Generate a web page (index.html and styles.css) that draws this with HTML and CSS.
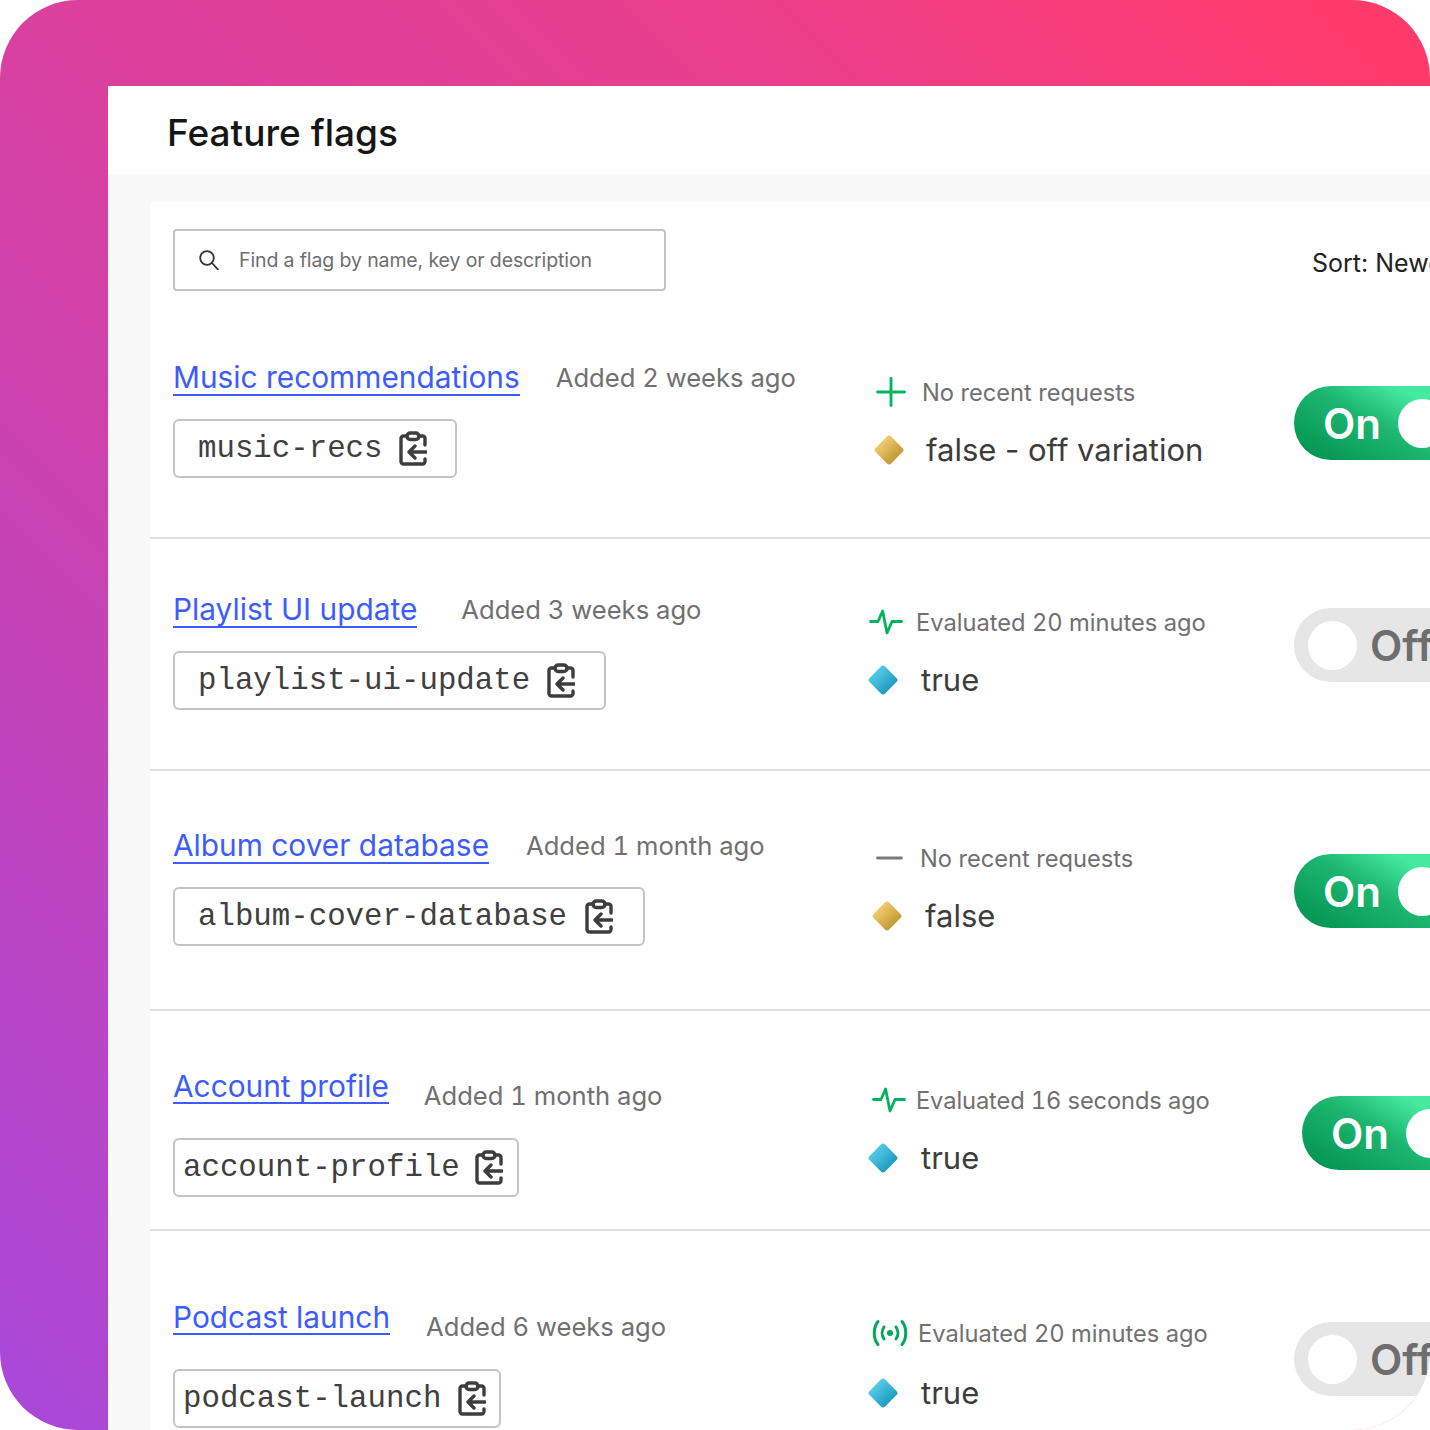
FILE: index.html
```html
<!DOCTYPE html>
<html lang="en">
<head>
    <meta charset="UTF-8">
    <title>Feature flags</title>
    <link rel="stylesheet" href="styles.css">
</head>
<body>
    <svg class="sprites" width="0" height="0">
        <symbol id="clip" viewBox="0 0 28 35">
            <g fill="none" stroke="#3d3d3d" stroke-width="3.4" stroke-linecap="round" stroke-linejoin="round">
                <path d="M26 14V7.5a2.500 2.500 0 0 0-2.500-2.500H20M8 5H4.500A2.500 2.500 0 0 0 2 7.500v23A2.500 2.500 0 0 0 4.500 33h19a2.500 2.500 0 0 0 2.500-2.500V28"/>
                <rect x="8" y="2" width="12" height="6.500" rx="3.200"/>
                <path d="M27 21H10M16 15l-6 6 6 6"/>
            </g>
        </symbol>
    </svg>

    <div class="frame">
        <main class="panel">
            <header class="top">
                <h1>Feature flags</h1>
            </header>
            <div class="content">
                <section class="card">
                    <div class="toolbar">
                        <div class="search">
                            <svg class="search-icon" viewBox="0 0 20 20" width="20" height="20">
                                <circle cx="8" cy="8" r="6.800" fill="none" stroke="#333" stroke-width="1.800"/>
                                <path d="M13 13l6 6.500" fill="none" stroke="#333" stroke-width="1.800" stroke-linecap="round"/>
                            </svg>
                            <span>Find a flag by name, key or description</span>
                        </div>
                        <div class="sort">Sort: Newest</div>
                    </div>

                    <article class="row row-1">
                        <div class="flag">
                            <div class="flag-title">
                                <a href="#">Music recommendations</a>
                                <span class="added">Added 2 weeks ago</span>
                            </div>
                            <div class="key">music-recs <svg class="clip"><use href="#clip"/></svg></div>
                        </div>
                        <div class="status">
                            <div class="status-line">
                                <svg class="status-icon" viewBox="0 0 30 30" width="30" height="30">
                                    <path d="M15 1.500v27M1.500 15h27" fill="none" stroke="#00b45f" stroke-width="2.800" stroke-linecap="round"/>
                                </svg>
                                <span>No recent requests</span>
                            </div>
                            <div class="value"><i class="diamond gold"></i>false - off variation</div>
                        </div>
                        <div class="toggle on"><span>On</span><i class="knob"></i></div>
                    </article>

                    <article class="row row-2">
                        <div class="flag">
                            <div class="flag-title">
                                <a href="#">Playlist UI update</a>
                                <span class="added">Added 3 weeks ago</span>
                            </div>
                            <div class="key">playlist-ui-update <svg class="clip"><use href="#clip"/></svg></div>
                        </div>
                        <div class="status">
                            <div class="status-line">
                                <svg class="status-icon" viewBox="0 0 34 26" width="34" height="26">
                                    <path d="M1.500 12.500H9L13.600 2 18 24l5-11.500h9.500" fill="none" stroke="#00b45f" stroke-width="2.800" stroke-linecap="round" stroke-linejoin="round"/>
                                </svg>
                                <span>Evaluated 20 minutes ago</span>
                            </div>
                            <div class="value"><i class="diamond blue"></i>true</div>
                        </div>
                        <div class="toggle off"><i class="knob"></i><span>Off</span></div>
                    </article>

                    <article class="row row-3">
                        <div class="flag">
                            <div class="flag-title">
                                <a href="#">Album cover database</a>
                                <span class="added">Added 1 month ago</span>
                            </div>
                            <div class="key">album-cover-database <svg class="clip"><use href="#clip"/></svg></div>
                        </div>
                        <div class="status">
                            <div class="status-line">
                                <svg class="status-icon" viewBox="0 0 27 6" width="27" height="6">
                                    <path d="M1.500 3h24" fill="none" stroke="#7a7a7a" stroke-width="2.800" stroke-linecap="round"/>
                                </svg>
                                <span>No recent requests</span>
                            </div>
                            <div class="value"><i class="diamond gold"></i>false</div>
                        </div>
                        <div class="toggle on"><span>On</span><i class="knob"></i></div>
                    </article>

                    <article class="row row-4">
                        <div class="flag">
                            <div class="flag-title">
                                <a href="#">Account profile</a>
                                <span class="added">Added 1 month ago</span>
                            </div>
                            <div class="key">account-profile <svg class="clip"><use href="#clip"/></svg></div>
                        </div>
                        <div class="status">
                            <div class="status-line">
                                <svg class="status-icon" viewBox="0 0 34 26" width="34" height="26">
                                    <path d="M1.500 12.500H9L13.600 2 18 24l5-11.500h9.500" fill="none" stroke="#00b45f" stroke-width="2.800" stroke-linecap="round" stroke-linejoin="round"/>
                                </svg>
                                <span>Evaluated 16 seconds ago</span>
                            </div>
                            <div class="value"><i class="diamond blue"></i>true</div>
                        </div>
                        <div class="toggle on"><span>On</span><i class="knob"></i></div>
                    </article>

                    <article class="row row-5">
                        <div class="flag">
                            <div class="flag-title">
                                <a href="#">Podcast launch</a>
                                <span class="added">Added 6 weeks ago</span>
                            </div>
                            <div class="key">podcast-launch <svg class="clip"><use href="#clip"/></svg></div>
                        </div>
                        <div class="status">
                            <div class="status-line">
                                <svg class="status-icon" viewBox="0 0 36 28" width="36" height="28">
                                    <g fill="none" stroke="#00a85a" stroke-width="3" stroke-linecap="round">
                                        <path d="M6 2.500c-5 6-5 17 0 23M30 2.500c5 6 5 17 0 23"/>
                                        <path d="M12 8c-2.500 3.500-2.500 8.500 0 12M24 8c2.500 3.500 2.500 8.500 0 12"/>
                                    </g>
                                    <circle cx="18" cy="14" r="3" fill="#00a85a"/>
                                </svg>
                                <span>Evaluated 20 minutes ago</span>
                            </div>
                            <div class="value"><i class="diamond blue"></i>true</div>
                        </div>
                        <div class="toggle off"><i class="knob"></i><span>Off</span></div>
                    </article>
                </section>
            </div>
        </main>
    </div>
</body>
</html>
```

FILE: styles.css
```css
html, body {
    margin: 0;
    padding: 0;
    background-color: #fff;
}

body {
    font-family: Inter, "Liberation Sans", sans-serif;
    color: #3d3d3d;
}

.sprites {
    position: absolute;
}

.frame {
    width: 1430px;
    height: 1430px;
    padding: 86px 0 0 108px;
    box-sizing: border-box;
    border-radius: 78px;
    overflow: hidden;
    background: linear-gradient(45deg, #a848da 0%, #d9409f 50%, #e83e8c 74%, #ff3a6b 96%);
}

.panel {
    width: 1322px;
    height: 1344px;
    overflow: hidden;
    background-color: #f8f8f8;
}

.top {
    height: 86px;
    padding: 3px 0 0 59px;
    background-color: #fff;
    display: flex;
    align-items: center;
}

.top h1 {
    margin: 0;
    font-size: 37px;
    font-weight: 500;
    color: #161616;
}

.content {
    padding: 26px 0 0 42px;
}

.card {
    width: 1280px;
    height: 1300px;
    background-color: #fff;
    border-radius: 4px 0 0 0;
}

/* search + sort */
.toolbar {
    display: flex;
    align-items: flex-start;
    padding: 28px 0 0 23px;
    height: 62px;
    white-space: nowrap;
}

.search {
    flex: none;
    width: 493px;
    height: 62px;
    box-sizing: border-box;
    border: 2px solid #c4c4c4;
    border-radius: 4px;
    display: flex;
    align-items: center;
    gap: 20px;
    padding: 0 0 1px 24px;
    font-size: 19.500px;
    letter-spacing: -0.12px;
    color: #6e6e6e;
}

.search-icon {
    flex: none;
}

.sort {
    margin: 19px 0 0 646px;
    font-size: 25px;
    color: #222;
}

/* flag rows */
.row {
    display: grid;
    grid-template-columns: 696px 425px 1fr;
    align-items: start;
    padding-left: 23px;
    box-sizing: border-box;
    border-bottom: 2px solid #dcdcdc;
    white-space: nowrap;
}

.flag-title {
    display: flex;
    align-items: flex-start;
    height: 38px;
}

.flag-title a {
    font-size: 29.850px;
    line-height: 34px;
    padding-top: 2px;
    color: #3d5cff;
    text-decoration: none;
    border-bottom: 2px solid #3d5cff;
}

.added {
    font-size: 25.600px;
    font-feature-settings: "tnum";
    line-height: 36px;
    color: #707070;
}

.key {
    display: inline-flex;
    align-items: center;
    height: 59px;
    box-sizing: border-box;
    border: 2px solid #c4c4c4;
    border-radius: 6px;
    font-family: "Liberation Mono", monospace;
    font-size: 30.750px;
    color: #404040;
    gap: 17px;
}

.clip {
    width: 28px;
    height: 35px;
}

.status-line {
    display: flex;
    align-items: center;
    height: 30px;
    font-size: 23.700px;
    font-feature-settings: "tnum";
    color: #707070;
}

.status-icon {
    flex: none;
}

.value {
    display: flex;
    align-items: center;
    font-size: 31px;
    line-height: 40px;
    color: #3d3d3d;
}

.diamond {
    width: 22px;
    height: 22px;
    flex: none;
    border-radius: 3px;
    transform: rotate(45deg);
}

.diamond.gold {
    background: linear-gradient(90deg, #eecb6e, #c49a36);
}

.diamond.blue {
    background: linear-gradient(90deg, #52cbe4, #209cc3);
}

.toggle {
    width: 200px;
    height: 74px;
    border-radius: 37px;
    display: flex;
    align-items: center;
    box-sizing: border-box;
    font-size: 42px;
    font-weight: 600;
}

.toggle.on {
    padding-left: 29px;
    gap: 17px;
    color: #fff;
    background: linear-gradient(30deg, #008f4c 0%, #1db771 45%, #45eaa0 70%);
}

.toggle.off {
    padding-left: 14px;
    gap: 13px;
    color: #6e6e6e;
    background-color: #e6e6e6;
}

.knob {
    width: 49px;
    height: 49px;
    flex: none;
    border-radius: 50%;
    background-color: #fff;
}

/* each row sits a little differently in the source picture */
.row-1 { height: 248px; padding-top: 67px; }
.row-1 .added { margin: 2px 0 0 36px; }
.row-1 .key { margin-top: 23px; padding: 0 28px 0 23px; gap: 16px; }
.row-1 .status { margin-top: 19px; padding-left: 7px; }
.row-1 .status-line { gap: 16px; }
.row-1 .value { margin-top: 23px; gap: 26px; padding-left: 2px; }
.row-1 .toggle { margin-top: 28px; }

.row-2 { height: 232px; padding-top: 52px; }
.row-2 .flag-title a { padding-top: 1px; }
.row-2 .added { margin: 1px 0 0 44px; }
.row-2 .key { margin-top: 22px; padding: 0 29px 0 23px; gap: 17px; }
.row-2 .status { margin-top: 16px; }
.row-2 .status-line { gap: 13px; }
.row-2 .value { margin-top: 23px; gap: 27px; padding-left: 3px; }
.row-2 .toggle { margin-top: 17px; }

.row-3 { height: 240px; padding-top: 56px; }
.row-3 .flag-title a { padding-top: 1px; }
.row-3 .added { margin: 1px 0 0 37px; }
.row-3 .key { margin-top: 22px; padding: 0 30px 0 23px; gap: 18px; }
.row-3 .status { margin-top: 16px; padding-left: 7px; }
.row-3 .status-line { gap: 17px; }
.row-3 .value { margin-top: 23px; gap: 27px; }
.row-3 .toggle { margin-top: 27px; }

.row-4 { height: 220px; padding-top: 57px; }
.row-4 .flag-title a { line-height: 32px; }
.row-4 .added { margin: 10px 0 0 35px; }
.row-4 .key { margin-top: 32px; padding: 0 14px 0 8px; gap: 15px; }
.row-4 .status { margin-top: 17px; padding-left: 3px; }
.row-4 .status-line { gap: 10px; letter-spacing: -0.12px; }
.row-4 .value { margin: 23px 0 0 -3px; gap: 27px; padding-left: 3px; }
.row-4 .toggle { margin: 28px 0 0 8px; }

.row-5 { height: 210px; padding-top: 68px; border-bottom: none; }
.row-5 .flag-title a { line-height: 32px; }
.row-5 .added { margin: 10px 0 0 36px; }
.row-5 .key { margin-top: 32px; padding: 0 13px 0 8px; }
.row-5 .status { margin-top: 19px; padding-left: 3px; }
.row-5 .status-line { gap: 10px; }
.row-5 .value { margin: 25px 0 0 -3px; gap: 27px; padding-left: 3px; }
.row-5 .toggle { margin-top: 23px; }
```
